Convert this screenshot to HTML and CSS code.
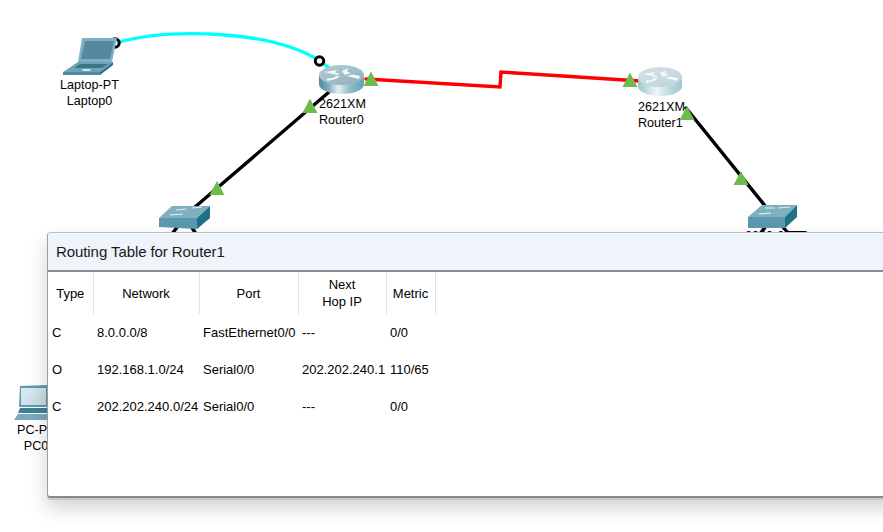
FILE: index.html
```html
<!DOCTYPE html>
<html lang="en">
<head>
    <meta charset="UTF-8">
    <meta name="viewport" content="width=device-width, initial-scale=1.0">
    <title>Routing Table for Router1</title>
    <link rel="stylesheet" href="styles.css">
</head>
<body>
    <div class="stage">
        <svg class="layer" viewBox="0 0 883 532" aria-hidden="true">
            <defs>
                <linearGradient id="router0Body" x1="0" x2="1" y1="0" y2="0">
                    <stop offset="0" stop-color="#4f8a9e"/>
                    <stop offset="0.22" stop-color="#7fb0bf"/>
                    <stop offset="0.42" stop-color="#e3f0f3"/>
                    <stop offset="0.7" stop-color="#8fbac7"/>
                    <stop offset="1" stop-color="#62a0b2"/>
                </linearGradient>
                <linearGradient id="router1Body" x1="0" x2="1" y1="0" y2="0">
                    <stop offset="0" stop-color="#9cc3cf"/>
                    <stop offset="0.42" stop-color="#eef6f7"/>
                    <stop offset="0.75" stop-color="#bcd6dd"/>
                    <stop offset="1" stop-color="#9fc5d0"/>
                </linearGradient>
                <linearGradient id="router0Top" x1="0" x2="1" y1="0" y2="1">
                    <stop offset="0" stop-color="#b4ccd5"/>
                    <stop offset="1" stop-color="#8fb0bd"/>
                </linearGradient>
                <linearGradient id="router1Top" x1="0" x2="1" y1="0" y2="1">
                    <stop offset="0" stop-color="#d3e2e7"/>
                    <stop offset="1" stop-color="#bcd3da"/>
                </linearGradient>
                <linearGradient id="screenFill" x1="0" x2="1" y1="0" y2="1">
                    <stop offset="0" stop-color="#dfeaf0"/>
                    <stop offset="1" stop-color="#c4d8e2"/>
                </linearGradient>
            </defs>

            <!-- links -->
            <g fill="none" stroke-linecap="round">
                <path d="M116 43 C150 33 185 32 225 35 C265 38 298 47 320 61 L332 70" stroke="#00ffff" stroke-width="3.4"/>
                <path d="M366 79 L500 87 L501 72 L640 81" stroke="#ff0000" stroke-width="3.4"/>
                <g stroke="#000" stroke-width="3.4">
                    <path d="M329 92 L195 207"/>
                    <path d="M686 108 L766 207"/>
                    <path d="M178 226 L172 234"/>
                    <path d="M191 226 L196 234"/>
                    <path d="M766 226 L760 234"/>
                    <path d="M782 226 L789 234"/>
                    <path d="M788 232 L803 232" stroke-width="2"/>
                </g>
            </g>
            <circle cx="115" cy="43" r="4.2" fill="#fff" stroke="#000" stroke-width="3"/>
            <circle cx="319.500" cy="61" r="4.200" fill="#fff" stroke="#000" stroke-width="3"/>

            <!-- laptop -->
            <path d="M82 38 L117 38 L112 62 L78 62 Z" fill="#7fb0c3"/>
            <path d="M85 41 L114 41 L110 59 L81 59 Z" fill="#54899f"/>
            <path d="M78 62 L113 62 L100 72 L63 72 Z" fill="#6fa3b6"/>
            <path d="M80 64 L108 64 L102 68 L74 68 Z" fill="#3e7488"/>
            <path d="M83 69 L91 69 L90 71 L82 71 Z" fill="#cfe0e6"/>
            <path d="M63 72 L100 72 L100 75 L63 75 Z" fill="#4f8a9e"/>
            <path d="M100 72 L113 62 L113 65 L100 75 Z" fill="#2f6f86"/>

            <!-- routers -->
            <g>
                <path d="M319 75 L364 75 L364 84 C364 90 354 94 341.500 94 C329 94 319 90 319 84 Z" fill="url(#router0Body)"/>
                <ellipse cx="341.500" cy="75" rx="22.500" ry="10" fill="url(#router0Top)"/>
                <g fill="#f4f8f9">
                    <path d="M324 72 L337 70 L335 72.500 L340 74 L337 75 L331 73.500 Z"/>
                    <path d="M345 75 L351 73 L347 71.500 L348 68 L342 71 L344 74 Z"/>
                    <path d="M347 76 L359 79 L360 76 L352 74.500 Z"/>
                    <path d="M327 81 L336 79 L340 76 L336 76 L333 78 L327 78.500 Z"/>
                </g>
            </g>
            <g>
                <path d="M638 77 L682 77 L682 86 C682 92 672 96 660 96 C648 96 638 92 638 86 Z" fill="url(#router1Body)"/>
                <ellipse cx="660" cy="77" rx="22" ry="10" fill="url(#router1Top)"/>
                <g fill="#f3f7f8">
                    <path d="M643 74 L655 72 L653 74.500 L658 76 L655 77 L649 75.500 Z"/>
                    <path d="M663 77 L669 75 L665 73.500 L666 70 L660 73 L662 76 Z"/>
                    <path d="M665 78 L677 81 L678 78 L670 76.500 Z"/>
                    <path d="M646 83 L654 81 L658 78 L654 78 L651 80 L646 80.500 Z"/>
                </g>
            </g>

            <!-- switches -->
            <g>
                <path d="M159 218 L172 206 L210 206 L197 218 Z" fill="#7fb0bf"/>
                <path d="M159 218 L197 218 L197 229 L159 227 Z" fill="#5a98ae"/>
                <path d="M197 218 L210 206 L210 218 L197 229 Z" fill="#1f7088"/>
                <path d="M176 210 L186 209 M192 208 L202 207 M170 215 L183 214" stroke="#e8f2f4" stroke-width="1.200"/>
            </g>
            <g>
                <path d="M748 217 L762 205 L797 205 L785 217 Z" fill="#7fb0bf"/>
                <path d="M748 217 L785 217 L785 228 L748 228 Z" fill="#5a98ae"/>
                <path d="M785 217 L797 205 L797 217 L785 228 Z" fill="#1f7088"/>
                <path d="M765 208 L775 208 M778 208 L790 207 M759 214 L771 213" stroke="#e8f2f4" stroke-width="1.200"/>
            </g>

            <!-- pc -->
            <path d="M20 386 L47 385 L47 407 L19 407 Z" fill="#5f99ae"/>
            <path d="M21 388 L46 388 L46 405 L21 405 Z" fill="url(#screenFill)"/>
            <path d="M20 408 L47 408 L47 413 L18 413 Z" fill="#3f7f96"/>
            <path d="M18 414 L47 414 L47 420 L14 420 Z" fill="#79a9bb"/>
        </svg>

        <div class="label label-laptop">Laptop-PT<br>Laptop0</div>
        <div class="label label-router0">2621XM<br>Router0</div>
        <div class="label label-router1">2621XM<br>Router1</div>
        <div class="label label-switch1">2960-24TT</div>
        <div class="label label-pc">PC-PT<br>PC0</div>

        <svg class="layer" viewBox="0 0 883 532" aria-hidden="true">
            <g fill="#6dbb4b">
                <path d="M310 98.500 L317.500 113 L302.500 113 Z"/>
                <path d="M371 71.500 L378.500 86 L363.500 86 Z"/>
                <path d="M630 72.500 L637.500 87 L622.500 87 Z"/>
                <path d="M687 106 L694.500 120 L679.500 120 Z"/>
                <path d="M217 181 L224.500 195 L209.500 195 Z"/>
                <path d="M741 171 L748.500 185 L733.500 185 Z"/>
            </g>
        </svg>

        <div class="window">
            <div class="window-title">Routing Table for Router1</div>
            <table class="routes">
                <colgroup>
                    <col class="col-type">
                    <col class="col-network">
                    <col class="col-port">
                    <col class="col-hop">
                    <col class="col-metric">
                    <col>
                </colgroup>
                <thead>
                    <tr>
                        <th>Type</th>
                        <th>Network</th>
                        <th>Port</th>
                        <th>Next<br>Hop IP</th>
                        <th>Metric</th>
                        <th class="filler"></th>
                    </tr>
                </thead>
                <tbody>
                    <tr>
                        <td>C</td>
                        <td>8.0.0.0/8</td>
                        <td>FastEthernet0/0</td>
                        <td>---</td>
                        <td>0/0</td>
                        <td></td>
                    </tr>
                    <tr>
                        <td>O</td>
                        <td>192.168.1.0/24</td>
                        <td>Serial0/0</td>
                        <td>202.202.240.1</td>
                        <td>110/65</td>
                        <td></td>
                    </tr>
                    <tr>
                        <td>C</td>
                        <td>202.202.240.0/24</td>
                        <td>Serial0/0</td>
                        <td>---</td>
                        <td>0/0</td>
                        <td></td>
                    </tr>
                </tbody>
            </table>
        </div>
    </div>
</body>
</html>
```

FILE: styles.css
```css
body {
    font-family: "Liberation Sans", Arial, sans-serif;
    font-size: 13px;
    margin: 0;
    padding: 0;
    background-color: #fff;
    color: #000;
}
.stage {
    position: relative;
    width: 883px;
    height: 532px;
    overflow: hidden;
}
.layer {
    position: absolute;
    left: 0;
    top: 0;
    width: 883px;
    height: 532px;
}
.label {
    position: absolute;
    font-size: 12.6px;
    line-height: 16px;
    white-space: nowrap;
}
.label-laptop {
    left: 49px;
    top: 77px;
    width: 81px;
    text-align: center;
}
.label-router0 {
    left: 319px;
    top: 96px;
}
.label-router1 {
    left: 638px;
    top: 99px;
}
.label-switch1 {
    left: 745px;
    top: 228px;
}
.label-pc {
    left: 1px;
    top: 422px;
    width: 70px;
    text-align: center;
}
.window {
    position: absolute;
    left: 47px;
    top: 232px;
    width: 860px;
    height: 266px;
    box-sizing: border-box;
    border: 1px solid #b9bcc0;
    border-bottom: 2px solid #858a90;
    border-left: 1px solid #9a9ea3;
    border-radius: 4px 0 0 4px;
    background: #fff;
    box-shadow: 0 2px 0 0 #c8c8c8, 0 10px 20px rgba(0, 0, 0, 0.18);
}
.window-title {
    height: 37px;
    line-height: 37px;
    padding-left: 8px;
    font-size: 15px;
    letter-spacing: -0.08px;
    color: #1a1a1a;
    background-color: #eff3fa;
    border-bottom: 2px solid #8b8d90;
    border-radius: 3px 0 0 0;
}
.routes {
    border-collapse: collapse;
    table-layout: fixed;
    width: 811px;
}
.col-type {
    width: 45px;
}
.col-network {
    width: 106px;
}
.col-port {
    width: 99px;
}
.col-hop {
    width: 88px;
}
.col-metric {
    width: 49px;
}
.routes th {
    height: 42px;
    padding: 0;
    font-weight: normal;
    line-height: 17px;
    border-right: 1px solid #e2e2e2;
}
.routes th.filler {
    border-right: 0;
}
.routes td {
    height: 37px;
    padding: 0 0 0 4px;
    white-space: nowrap;
}
```
